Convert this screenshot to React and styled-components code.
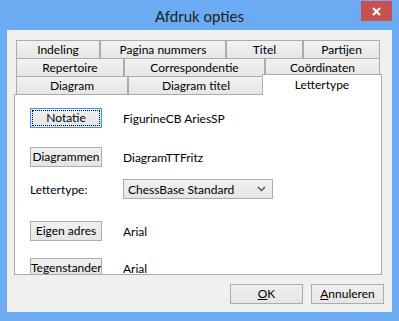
import React from 'react';
import styled, { createGlobalStyle, css } from 'styled-components';

const tabRows = [
	[
		{ label: 'Indeling', width: 84 },
		{ label: 'Pagina nummers', width: 126 },
		{ label: 'Titel', width: 77 },
		{ label: 'Partijen', width: 77 },
	],
	[
		{ label: 'Repertoire', width: 108 },
		{ label: 'Correspondentie', width: 141 },
		{ label: 'Coördinaten', width: 115 },
	],
	[
		{ label: 'Diagram', width: 112 },
		{ label: 'Diagram titel', width: 136 },
		{ label: 'Lettertype', width: 116, active: true },
	],
];

const fontRows = [
	{ button: 'Notatie', value: 'FigurineCB AriesSP', top: 13, focused: true },
	{ button: 'Diagrammen', value: 'DiagramTTFritz', top: 19 },
	{ label: 'Lettertype:', select: 'ChessBase Standard', top: 12 },
	{ button: 'Eigen adres', value: 'Arial', top: 22 },
	{ button: 'Tegenstander', value: 'Arial', top: 17 },
];

function App() {
	return (
		<>
			<GlobalStyle />
			<Window>
				<TitleBar>
					<span />
					<Title>Afdruk opties</Title>
					<CloseButton>
						<svg width="9" height="9" viewBox="0 0 9 9">
							<path d="M1 1 L8 8 M8 1 L1 8" stroke="#fff" strokeWidth="2" />
						</svg>
					</CloseButton>
				</TitleBar>
				<Client>
					<TabControl>
						<TabStrip>
							{tabRows.map((row, i) => (
								<TabRow key={i}>
									{row.map(tab => (
										<Tab key={tab.label} $width={tab.width} $active={tab.active}>
											{tab.label}
										</Tab>
									))}
								</TabRow>
							))}
						</TabStrip>
						<Panel>
							{fontRows.map((row, i) => (
								<FontRow key={i} $top={row.top}>
									{row.button ? (
										<PushButton $focused={row.focused}>
											{row.focused ? <FocusRect>{row.button}</FocusRect> : row.button}
										</PushButton>
									) : (
										<FieldLabel>{row.label}</FieldLabel>
									)}
									{row.select ? (
										<Select>
											<span>{row.select}</span>
											<svg width="9" height="6" viewBox="0 0 9 6">
												<path d="M1 1 L4.5 4.5 L8 1" stroke="#555" strokeWidth="1.4" fill="none" />
											</svg>
										</Select>
									) : (
										<Value>{row.value}</Value>
									)}
								</FontRow>
							))}
						</Panel>
					</TabControl>
					<ButtonBar>
						<DialogButton><u>O</u>K</DialogButton>
						<DialogButton><u>A</u>nnuleren</DialogButton>
					</ButtonBar>
				</Client>
			</Window>
		</>
	);
}

// ======== styles ==========
const GlobalStyle = createGlobalStyle`
	body {
		margin: 0;
		font-family: Lato, "Noto Sans", sans-serif;
		font-size: 12px;
		color: #000;
	}
`

const Window = styled.div`
	width: 399px;
	height: 321px;
	box-sizing: border-box;
	background: #6aabf1;
	padding: 0 7px 9px 7px;
	display: flex;
	flex-direction: column;
`

const TitleBar = styled.div`
	height: 30px;
	flex: 0 0 30px;
	display: grid;
	grid-template-columns: 1fr auto 1fr;
	align-items: center;
`

const Title = styled.div`
	font-size: 15px;
	color: #222;
	padding-top: 1px;
`

const CloseButton = styled.div`
	justify-self: end;
	align-self: start;
	margin-top: 1px;
	width: 31px;
	height: 20px;
	background: #c75050;
	display: flex;
	align-items: center;
	justify-content: center;
`

const Client = styled.div`
	flex: 1;
	background: #f0f0f0;
	padding: 10px 8px 8px 7px;
	display: flex;
	flex-direction: column;
`

const TabControl = styled.div`
	margin-right: 2px;
	display: flex;
	flex-direction: column;
`

const TabStrip = styled.div`
	padding: 0 2px;
	display: flex;
	flex-direction: column;
`

const TabRow = styled.div`
	display: flex;
	height: 18px;
`

const Tab = styled.div`
	box-sizing: border-box;
	width: ${p => p.$width}px;
	height: 18px;
	border: 1px solid #acacac;
	border-bottom: none;
	background: linear-gradient(#f2f2f2, #e6e6e6);
	display: flex;
	align-items: center;
	justify-content: center;
	white-space: nowrap;
	${p => p.$active && css`
		position: relative;
		z-index: 1;
		width: ${p.$width + 4}px;
		height: 21px;
		margin: -2px -2px -1px -2px;
		background: #fff;
		align-items: flex-start;
		padding-top: 2px;
	`}
`

const Panel = styled.div`
	box-sizing: border-box;
	height: 181px;
	background: #fff;
	border: 1px solid #acacac;
	overflow: hidden;
	padding: 0 0 0 15px;
	display: flex;
	flex-direction: column;
`

const FontRow = styled.div`
	margin-top: ${p => p.$top}px;
	height: 20px;
	flex: 0 0 20px;
	display: grid;
	grid-template-columns: 93px auto;
	align-items: center;
`

const PushButton = styled.div`
	box-sizing: border-box;
	width: 72px;
	height: 20px;
	border: 1px solid #acacac;
	background: linear-gradient(#f0f0f0, #e5e5e5);
	text-align: center;
	line-height: 18px;
	white-space: nowrap;
	overflow: hidden;
	${p => p.$focused && css`
		border-color: #3399ff;
		padding: 1px;
		line-height: 14px;
	`}
`

const FocusRect = styled.div`
	height: 14px;
	border: 1px dotted #000;
`

const FieldLabel = styled.div`
	padding-left: 0;
`

const Value = styled.div`
	white-space: nowrap;
`

const Select = styled.div`
	box-sizing: border-box;
	width: 150px;
	height: 20px;
	border: 1px solid #acacac;
	background: linear-gradient(#f0f0f0, #e5e5e5);
	display: flex;
	align-items: center;
	justify-content: space-between;
	padding: 0 6px 0 4px;
`

const ButtonBar = styled.div`
	margin-top: 9px;
	display: flex;
	justify-content: flex-end;
	gap: 8px;
`

const DialogButton = styled.div`
	box-sizing: border-box;
	width: 73px;
	height: 20px;
	border: 1px solid #acacac;
	background: linear-gradient(#f0f0f0, #e5e5e5);
	text-align: center;
	line-height: 18px;
`

export default App;
